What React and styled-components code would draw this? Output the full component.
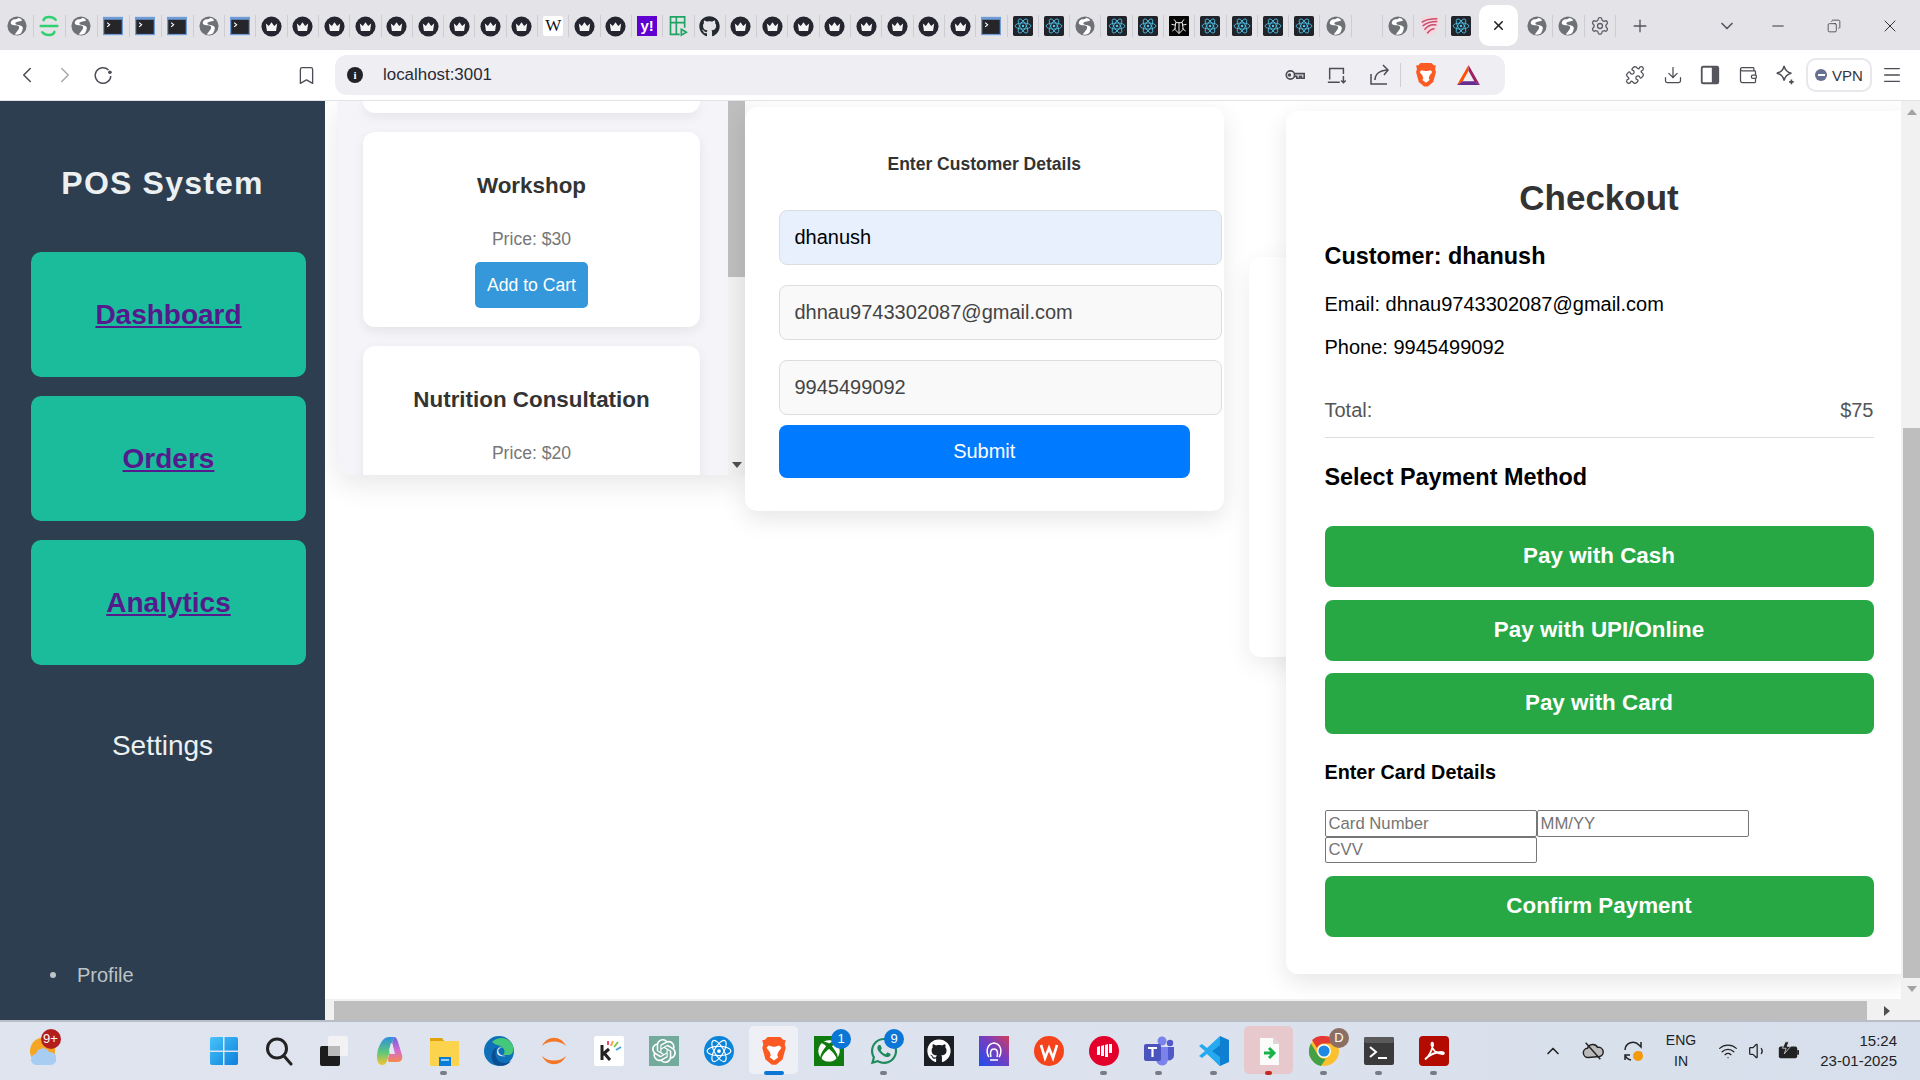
import styled, { createGlobalStyle } from "styled-components";
import {
  Bookmark,
  ChevronDown,
  ChevronLeft,
  ChevronRight,
  ChevronUp,
  Copy,
  Download,
  Menu,
  Minus,
  Plus,
  Puzzle,
  Settings,
  Wallet,
  Wifi,
  Volume1,
  X,
} from "lucide-react";
import { FaGithub, FaWhatsapp, FaXbox } from "react-icons/fa";
import { SiOpenai } from "react-icons/si";

const GlobalStyle = createGlobalStyle`
  html, body { margin: 0; padding: 0; height: 100%; overflow: hidden; }
  body { font-family: "Liberation Sans", Arial, sans-serif; background: #fff; }
  * { box-sizing: content-box; }
`;

/* ---------- small drawings ---------- */

const Globe = ({ size = 20 }) => (
  <svg width={size} height={size} viewBox="0 0 24 24">
    <circle cx="12" cy="12" r="11.5" fill="#6e7175" />
    <path fill="#fff" d="M14 1.5c-1 2-3 2.5-5 2.5S5 6 4.500 8s2 2.500 4.500 3 5 0 5.500 2-1 4-2.500 5.500-2 3-3 3.500c3 1 6 0 8-1.500 1-2 2-4 2-6s-2-3-4-3.500-4.500-.5-5-2 2-2 4-2.500 4-.5 4-1.500c-1-1.500-2.500-2.500-4.500-2.500z" />
  </svg>
);

const Crown = () => (
  <svg width="21" height="21" viewBox="0 0 24 24">
    <circle cx="12" cy="12" r="11.500" fill="#25252f" />
    <path fill="#f4f4f4" d="M5.500 8.500l3.500 3 3-4.500 3 4.500 3.500-3-1.300 8.500H6.800z" />
  </svg>
);

const Terminal = () => (
  <svg width="20" height="20" viewBox="0 0 24 24">
    <rect x="0" y="1" width="24" height="22" fill="#6f9bd8" />
    <rect x="1.500" y="4.500" width="21" height="17" fill="#26262a" />
    <path d="M5 8l3 2.500L5 13" stroke="#fff" strokeWidth="1.300" fill="none" />
  </svg>
);

const Atom = ({ color = "#4fc3e8", width = 1 }) => (
  <g fill="none" stroke={color} strokeWidth={width}>
    <ellipse cx="12" cy="12" rx="9.500" ry="3.700" />
    <ellipse cx="12" cy="12" rx="9.500" ry="3.700" transform="rotate(60 12 12)" />
    <ellipse cx="12" cy="12" rx="9.500" ry="3.700" transform="rotate(120 12 12)" />
    <circle cx="12" cy="12" r="1.500" fill={color} stroke="none" />
  </g>
);

const ReactTab = () => (
  <svg width="20" height="20" viewBox="0 0 24 24">
    <rect width="24" height="24" rx="2" fill="#20232a" />
    <Atom />
  </svg>
);

const BugTab = () => (
  <svg width="20" height="20" viewBox="0 0 24 24">
    <rect width="24" height="24" rx="1" fill="#050505" />
    <path d="M8 8h8l1 8-5 5-5-5zM6 4l3 4M18 4l-3 4M3 10l5 1M21 10l-5 1M4 18l4-3M20 18l-4-3M12 8v13" stroke="#eee" strokeWidth="1.200" fill="none" />
  </svg>
);

const SentryTab = () => (
  <svg width="20" height="22" viewBox="0 0 24 26" fill="none" stroke="#2fd16f" strokeWidth="3" strokeLinecap="round">
    <path d="M20 5.500C16 1 7 1 5.500 6" />
    <path d="M2 13h20" />
    <path d="M4 20.500C8 25 17 25 18.500 20" />
  </svg>
);

const SheetTab = () => (
  <svg width="20" height="22" viewBox="0 0 24 26" fill="none" stroke="#1fa463" strokeWidth="2">
    <path d="M14 23H3V2h17v13M3 9h17M10 2v21" />
    <path d="M16 17l6 3.500-6 3.500z" />
  </svg>
);

const ShieldTab = () => (
  <svg width="22" height="24" viewBox="0 0 24 26">
    <path fill="#f3d9dd" d="M2 4c7-3 13-3 20 0 0 9-2 16-10 20C4 20 2 13 2 4z" />
    <path d="M3 9c5-4 11-4 17-4M4 13c5-5 11-5 16-5M6 17c4-5 9-6 13-5M9 21c3-4 6-5 8-5" stroke="#c94a6c" strokeWidth="1.700" fill="none" />
  </svg>
);

const WikiTab = styled.span`
  width: 20px;
  height: 20px;
  background: #fff;
  border-radius: 2px;
  color: #111;
  font: 17px/20px "Liberation Serif", serif;
  text-align: center;
`;

const YahooTab = styled.span`
  width: 20px;
  height: 20px;
  background: #6001d2;
  color: #fff;
  font: bold 15px/20px "Liberation Sans", sans-serif;
  text-align: center;
`;

const BraveLogo = ({ size = 22 }) => (
  <svg width={size} height={size * 1.15} viewBox="0 0 24 28">
    <path fill="#fb5b22" d="M6 1h12l2.500 2.500L23 4l-1 4 1 3-3 11-6 5h-4l-6-5L1 11l1-3-1-4 2.500-.5z" />
    <path fill="#fff" d="M7 9l4 1h2l4-1 2 2-3 4-1 3 1 2-4 3-4-3 1-2-1-3-3-4z" />
  </svg>
);

const BatLogo = () => (
  <svg width="23" height="22" viewBox="0 0 24 23">
    <polygon points="12,1 0,22 6,18 12,7" fill="#ff5000" />
    <polygon points="12,1 24,22 18,18 12,7" fill="#9e1f63" />
    <polygon points="0,22 24,22 18,18 6,18" fill="#662d91" />
  </svg>
);

const KeyIcon = () => (
  <svg width="22" height="22" viewBox="0 0 24 24" fill="none" stroke="#4c4c55" strokeWidth="1.800">
    <circle cx="7" cy="12" r="4.500" />
    <path d="M11.500 10.500H22v5h-3v-2h-2v2h-3v-2h-2.500" />
    <circle cx="6" cy="12" r="1" fill="#4c4c55" />
  </svg>
);

const InstallIcon = () => (
  <svg width="22" height="22" viewBox="0 0 24 24" fill="none" stroke="#4c4c55" strokeWidth="1.600">
    <path d="M4 17V5h15v6M2 20h13M19 13v7M16.500 18l2.500 2.500 2.500-2.500" />
  </svg>
);

const ShareIcon = () => (
  <svg width="24" height="24" viewBox="0 0 24 24" fill="none" stroke="#4c4c55" strokeWidth="1.500">
    <path d="M4 11v10h16" />
    <path d="M8 17c0-6 5-10 13-10M16 2l5 5-4 5" />
  </svg>
);

const ReloadIcon = () => (
  <svg width="22" height="22" viewBox="0 0 24 24" fill="none" stroke="#4c4c55" strokeWidth="1.600">
    <path d="M18 6.500A8.500 8.500 0 1020.500 13" />
    <circle cx="19.500" cy="9" r="2" fill="#4c4c55" stroke="none" />
  </svg>
);

const SidePanelIcon = () => (
  <svg width="22" height="22" viewBox="0 0 24 24">
    <rect x="3" y="3" width="18" height="18" rx="1.500" fill="none" stroke="#55555e" strokeWidth="2" />
    <rect x="14" y="3" width="7" height="18" fill="#55555e" />
  </svg>
);

const StarIcon = () => (
  <svg width="22" height="22" viewBox="0 0 24 24" fill="none" stroke="#4c4c55" strokeWidth="1.600">
    <path d="M11 2c1 5 3 7 8 8-5 1-7 3-8 8-1-5-3-7-8-8 5-1 7-3 8-8z" />
    <path d="M19 17v5M16.500 19.500h5" strokeWidth="1.800" />
  </svg>
);

const InfoDot = styled.span`
  width: 16px;
  height: 16px;
  border-radius: 50%;
  background: #222228;
  color: #fff;
  font: bold 11px/16px "Liberation Serif", serif;
  text-align: center;
`;

const WindowsIcon = () => (
  <svg width="30" height="30" viewBox="0 0 30 30">
    <defs>
      <linearGradient id="win" x1="0" y1="0" x2="1" y2="1">
        <stop offset="0" stopColor="#47c4f8" />
        <stop offset="1" stopColor="#0d7fdc" />
      </linearGradient>
    </defs>
    <path fill="url(#win)" d="M1 3a2 2 0 012-2h11v13.500H1zM15.500 1H27a2 2 0 012 2v11.500H15.500zM1 16h13v13H3a2 2 0 01-2-2zM15.500 16H29v11a2 2 0 01-2 2H15.500z" />
  </svg>
);

const SearchIcon = () => (
  <svg width="30" height="30" viewBox="0 0 30 30" fill="none" stroke="#222" strokeWidth="3">
    <circle cx="13" cy="12.500" r="9.500" />
    <path d="M20 20l7 8" strokeLinecap="round" />
  </svg>
);

const TaskViewIcon = () => (
  <svg width="30" height="30" viewBox="0 0 30 30">
    <rect x="1" y="10" width="20" height="20" rx="2" fill="#1c1c1c" />
    <rect x="9" y="0" width="20" height="20" rx="2" fill="#f2f2f2" />
    <rect x="9" y="10" width="12" height="10" fill="#b9b9b9" />
  </svg>
);

const CopilotIcon = () => (
  <svg width="30" height="30" viewBox="0 0 30 30">
    <defs>
      <linearGradient id="cpa" x1="0" y1="0" x2="0" y2="1">
        <stop offset="0" stopColor="#2d8fe0" />
        <stop offset=".55" stopColor="#5fc77a" />
        <stop offset="1" stopColor="#f4c430" />
      </linearGradient>
      <linearGradient id="cpb" x1="0" y1="0" x2="0" y2="1">
        <stop offset="0" stopColor="#6a5fe0" />
        <stop offset=".55" stopColor="#d66bd0" />
        <stop offset="1" stopColor="#f58a4b" />
      </linearGradient>
    </defs>
    <path fill="url(#cpa)" d="M15 1h5l-7 24c-1 3-3 4-5 4-3 0-5-3-5-8C3 12 8 1 15 1z" />
    <path fill="url(#cpb)" d="M20 1c2 0 3 2 4 5l4 13c1 4-1 7-4 7h-8c-2 0-2-1-2-3l6-22z" />
    <path fill="#e3e7f0" d="M15 14l2-7c1 0 2 1 2 3l2 8h-5z" />
  </svg>
);

const FolderIcon = () => (
  <svg width="30" height="30" viewBox="0 0 30 30">
    <path fill="#e0a30b" d="M1 2h12l3 4H1z" />
    <rect x="1" y="5" width="29" height="25" rx="1" fill="#fbd34d" />
    <rect x="10" y="21" width="12" height="9" fill="#0c7dd6" />
    <rect x="12" y="23" width="8" height="2" fill="#8ed0f8" />
  </svg>
);

const EdgeIcon = () => (
  <svg width="30" height="30" viewBox="0 0 30 30">
    <circle cx="15" cy="15" r="15" fill="#0f6fb8" />
    <path fill="#45c87a" d="M8 6c6-6 16-5 20 2 3 5 1 11-3 11h-6c2-2 2-5 0-7-3-3-8-3-11-6z" />
    <path fill="#e3e7f0" d="M22 20c-4 1-9 0-9-4s3-6 6-4c-3-1-6 2-4 5 1 2 4 3 7 3z" />
    <path fill="#0b4d91" d="M12 29C6 25 6 15 13 11c-3 5-2 12 3 15 4 2 8 1 11-1-3 4-9 6-15 4z" />
  </svg>
);

const ArcIcon = () => (
  <svg width="30" height="30" viewBox="0 0 30 30" fill="#f37726">
    <path d="M3 10C8 -1 22 -1 27 10 21 4 9 4 3 10z" />
    <path d="M3 20c5 11 19 11 24 0-6 6-18 6-24 0z" />
  </svg>
);

const KiteIcon = () => (
  <svg width="30" height="30" viewBox="0 0 30 30">
    <rect width="30" height="30" rx="2" fill="#fff" />
    <path d="M8 9v15M8 19l7-6M10 17l6 7" stroke="#222" strokeWidth="3" fill="none" />
    <path d="M17 10l2-5" stroke="#f4a742" strokeWidth="2" />
    <path d="M20 11l4-5" stroke="#7ac943" strokeWidth="2" />
    <path d="M22 14l5-3" stroke="#45a3e5" strokeWidth="2" />
    <path d="M14 9l0-4" stroke="#e94e77" strokeWidth="2" />
  </svg>
);

const IconTile = styled.span`
  width: 30px;
  height: 30px;
  display: flex;
  align-items: center;
  justify-content: center;
  background: ${(p) => p.$bg};
  color: #fff;
`;

const ReactCircle = () => (
  <svg width="30" height="30" viewBox="0 0 24 24">
    <circle cx="12" cy="12" r="12" fill="#0b84d9" />
    <Atom color="#fff" width="0.900" />
  </svg>
);

const ProtonIcon = () => (
  <svg width="30" height="30" viewBox="0 0 30 30">
    <defs>
      <linearGradient id="pr" x1="0" y1="1" x2="1" y2="0">
        <stop offset="0" stopColor="#1d4ff0" />
        <stop offset=".6" stopColor="#7d3dbb" />
        <stop offset="1" stopColor="#cf3f5a" />
      </linearGradient>
    </defs>
    <rect width="30" height="30" fill="url(#pr)" />
    <path d="M10 21c-3-4-3-13 5-14 8 1 8 10 5 14M11 24h8M12 21c-1-3-1-8 3-8s4 5 3 8" stroke="#fff" strokeWidth="1.500" fill="none" />
  </svg>
);

const WpsIcon = () => (
  <svg width="30" height="30" viewBox="0 0 30 30">
    <circle cx="15" cy="15" r="15" fill="#f5441b" />
    <path d="M7 9l4 13 4-10 4 10 4-13" stroke="#fff" strokeWidth="2.600" fill="none" />
  </svg>
);

const MiIcon = () => (
  <svg width="30" height="30" viewBox="0 0 30 30">
    <circle cx="15" cy="15" r="15" fill="#e3002b" />
    <path fill="#fff" d="M8 11l3-1v9H8zM12 10l3-1v11h-3zM16 9l3-1v13h-3zM20 8h3v9h-3z" />
  </svg>
);

const TeamsIcon = () => (
  <svg width="32" height="30" viewBox="0 0 32 30">
    <circle cx="19" cy="5" r="4.500" fill="#7b83eb" />
    <circle cx="27" cy="7" r="3.200" fill="#5059c9" />
    <path fill="#5059c9" d="M22 11h9v9a5 5 0 01-7 4z" />
    <path fill="#7b83eb" d="M10 11h15v12a6 6 0 01-12 1z" />
    <rect x="1" y="8" width="17" height="17" rx="2" fill="#4b53bc" />
    <path d="M5 12h9M9.500 12v9" stroke="#fff" strokeWidth="2.200" />
  </svg>
);

const VscodeIcon = () => (
  <svg width="30" height="30" viewBox="0 0 30 30">
    <path fill="#0e7fd1" d="M21 0l9 4v22l-9 4-12-12 12-9.500z" />
    <path fill="#25a9ef" d="M21 0l-13 12-5-4-3 2 6 5-6 5 3 2 5-4 13 12V21l-8-6 8-6z" />
  </svg>
);

const NoteIcon = () => (
  <svg width="24" height="30" viewBox="0 0 24 30">
    <path fill="#fbfbfb" d="M3 2h13l6 6v21H3z" />
    <path fill="#d8d8d8" d="M16 2l6 6h-6z" />
    <path d="M7 17h8M12 12l5 5-5 5" stroke="#18b24b" strokeWidth="3" fill="none" />
  </svg>
);

const ChromeIcon = () => (
  <svg width="30" height="30" viewBox="0 0 30 30">
    <circle cx="15" cy="15" r="15" fill="#fbc02d" />
    <path fill="#e53935" d="M15 0a15 15 0 0113 7.500H15A7.500 7.500 0 008 12L3 4A15 15 0 0115 0z" />
    <path fill="#43a047" d="M2 7.500L9 19a7.500 7.500 0 008 3.500L12 30A15 15 0 012 7.500z" />
    <circle cx="15" cy="15" r="7" fill="#fff" />
    <circle cx="15" cy="15" r="5.600" fill="#1e88e5" />
  </svg>
);

const ConsoleIcon = () => (
  <svg width="30" height="30" viewBox="0 0 30 30">
    <rect y="1" width="30" height="28" rx="2" fill="#3a3a3a" />
    <rect y="1" width="30" height="6" rx="2" fill="#5a5a5a" />
    <path d="M6 11l6 5-6 5" stroke="#fff" strokeWidth="2" fill="none" />
    <path d="M14 22h9" stroke="#fff" strokeWidth="2" />
  </svg>
);

const PdfIcon = () => (
  <svg width="30" height="30" viewBox="0 0 30 30">
    <rect width="30" height="30" rx="4" fill="#b30b00" />
    <path d="M6 23c4-2 7-9 8-14 .5-3-2-3-1.500 0 1 5 5 9 11 9 2 0 2-2-1-2-5 0-11 2-16 7z" stroke="#fff" strokeWidth="1.800" fill="none" />
  </svg>
);

const WeatherIcon = () => (
  <svg width="27" height="30" viewBox="0 0 27 30">
    <path fill="#f6a623" d="M17 1C8 1 2 6 1 14c-.5 5 2 9 5 10h20V6c-2-3-5-5-9-5z" />
    <path fill="#a8cdf3" d="M8 29a5.500 5.500 0 01-1-11 7 7 0 0113-2 6.500 6.500 0 012 13z" />
  </svg>
);

const CloudOffIcon = () => (
  <svg width="22" height="22" viewBox="0 0 24 24" fill="none" stroke="#222" strokeWidth="1.600">
    <path d="M7 19a5 5 0 01-1-10 6 6 0 0111-1 5 5 0 012 10z" fill="#bbb" />
    <path d="M4 3l16 18" />
  </svg>
);

const SyncIcon = () => (
  <svg width="24" height="24" viewBox="0 0 24 24" fill="none" stroke="#222" strokeWidth="1.500">
    <path d="M4 11a8 8 0 0114-5l2 2V3M20 13a8 8 0 01-2 4M4 21v-5h5M4 16a8 8 0 006 5" />
    <circle cx="17" cy="17" r="5" fill="#f59a0c" stroke="none" />
  </svg>
);

const BatteryIcon = () => (
  <svg width="22" height="22" viewBox="0 0 24 24">
    <rect x="2" y="7" width="20" height="13" rx="2" fill="#222" />
    <rect x="22" y="11" width="2" height="5" fill="#222" />
    <path d="M9 2l-3 7h4l-2 6 7-8h-4l2-5z" fill="#222" stroke="#e5e9f1" strokeWidth="0.800" />
  </svg>
);

/* ---------- browser chrome ---------- */

const Page = styled.div`
  width: 1920px;
  height: 1080px;
  display: flex;
  flex-direction: column;
  overflow: hidden;
`;

const TabStrip = styled.div`
  height: 50px;
  background: #e3e3e8;
  display: flex;
  align-items: center;
  padding-left: 1.500px;
`;

const Tab = styled.div`
  flex: none;
  width: ${(p) => (p.$loose ? 32.05 : 31.3)}px;
  height: 22px;
  margin-top: 2px;
  display: flex;
  align-items: center;
  justify-content: center;
  box-sizing: border-box;
  border-right: 1px solid ${(p) => (p.$plain ? "transparent" : "#cdcdd3")};
`;

const ActiveTab = styled.div`
  flex: none;
  width: 39px;
  height: 41px;
  margin: 1px 4px 0 2px;
  background: #fff;
  border-radius: 10px;
  display: flex;
  align-items: center;
  justify-content: center;
  color: #222;
`;

const NewTab = styled.div`
  flex: none;
  width: 40px;
  height: 30px;
  margin-top: 2px;
  margin-left: 4px;
  display: flex;
  align-items: center;
  justify-content: center;
  color: #55555e;
`;

const WindowControls = styled.div`
  margin-left: auto;
  margin-right: 2px;
  display: flex;
  align-items: center;
  color: #333;
`;

const TabsMenu = styled.div`
  margin: 2px 13px 0 0;
  display: flex;
  color: #55555e;
`;

const WindowButton = styled.div`
  width: 56px;
  height: 32px;
  margin-top: 2px;
  display: flex;
  align-items: center;
  justify-content: center;
`;

const Toolbar = styled.div`
  height: 50px;
  background: #fff;
  border-bottom: 1px solid #e1e1e7;
  display: flex;
  align-items: center;
`;

const NavGroup = styled.div`
  width: 317px;
  padding: 0 10px 0 8px;
  display: flex;
  align-items: center;
`;

const ToolButton = styled.div`
  flex: none;
  width: ${(p) => p.$w || 38}px;
  height: 34px;
  margin-left: ${(p) => (p.$push ? "auto" : "0")};
  display: flex;
  align-items: center;
  justify-content: center;
  color: ${(p) => p.$color || "#4c4c55"};
`;

const Address = styled.div`
  width: 1170px;
  height: 40px;
  box-sizing: border-box;
  padding: 0 16px 0 12px;
  background: #eeeef3;
  border-radius: 12px;
  display: flex;
  align-items: center;
`;

const Url = styled.span`
  margin-left: 20px;
  font-size: 16.900px;
  color: #2a2a33;
`;

const AddressActions = styled.div`
  margin-left: auto;
  display: flex;
  align-items: center;
`;

const ActionDivider = styled.span`
  width: 1px;
  height: 24px;
  background: #cfcfd6;
  margin-right: 4px;
`;

const ToolbarRight = styled.div`
  margin-left: auto;
  padding-right: 8px;
  display: flex;
  align-items: center;
`;

const VpnPill = styled.div`
  width: 62px;
  height: 30px;
  margin-left: 2px;
  border: 2px solid #e7e7ec;
  border-radius: 10px;
  display: flex;
  align-items: center;
  justify-content: center;
  gap: 5px;
  font-size: 15px;
  color: #33333b;
`;

const VpnDot = styled.span`
  width: 12px;
  height: 12px;
  border-radius: 50%;
  background: #66708f;
  display: flex;
  align-items: center;
  justify-content: center;
  &::after {
    content: "";
    width: 7px;
    height: 2px;
    background: #fff;
  }
`;

/* ---------- app ---------- */

const Body = styled.div`
  height: 919px;
  display: flex;
`;

const Sidebar = styled.aside`
  flex: none;
  width: 325px;
  background: #2c3e50;
  display: flex;
  flex-direction: column;
  position: relative;
  z-index: 2;
`;

const Brand = styled.h2`
  margin: 64px 0 51px;
  font-size: 32px;
  line-height: 36px;
  font-weight: 700;
  letter-spacing: 1.200px;
  color: #ecf0f1;
  text-align: center;
`;

const NavLink = styled.a`
  width: 275px;
  height: 125px;
  margin: 0 0 19px 31px;
  background: #1abc9c;
  border-radius: 10px;
  display: flex;
  align-items: center;
  justify-content: center;
  color: #551a8b;
  font-size: 28px;
  font-weight: 700;
  text-decoration: underline;
`;

const SettingsLabel = styled.div`
  margin-top: 46px;
  font-size: 28px;
  line-height: 32px;
  color: #ecf0f1;
  text-align: center;
`;

const ProfileList = styled.ul`
  margin: auto 0 0;
  padding: 0 0 33px 50px;
  list-style: none;
  color: #bdc3c7;
  font-size: 20px;
  line-height: 24px;
`;

const ProfileItem = styled.li`
  display: flex;
  align-items: center;
  &::before {
    content: "";
    width: 6px;
    height: 6px;
    margin-right: 21px;
    border-radius: 50%;
    background: #bdc3c7;
  }
`;

const Viewport = styled.div`
  flex: 1;
  min-width: 0;
  display: grid;
  grid-template-columns: minmax(0, 1fr) 19px;
  grid-template-rows: minmax(0, 1fr) 21px;
`;

const Stage = styled.main`
  overflow: hidden;
  display: flex;
  align-items: flex-start;
  padding-left: 13px;
  background: #fff;
`;

const ScrollRail = styled.div`
  background: #f1f1f1;
  display: flex;
  flex-direction: ${(p) => (p.$horizontal ? "row" : "column")};
  align-items: flex-end;
`;

const RailArrow = styled.div`
  flex: none;
  width: ${(p) => p.$w || 17}px;
  height: ${(p) => p.$h || 21}px;
  display: flex;
  align-items: center;
  justify-content: center;
  &::after {
    content: "";
    border-style: solid;
    border-color: transparent;
    ${(p) => p.$dir === "up" && `border-width: 0 5px 6px; border-bottom-color: ${p.$color || "#a3a3a3"};`}
    ${(p) => p.$dir === "down" && `border-width: 6px 5px 0; border-top-color: ${p.$color || "#a3a3a3"};`}
    ${(p) => p.$dir === "right" && `border-width: 5px 0 5px 6px; border-left-color: ${p.$color || "#505050"};`}
  }
`;

const RailThumb = styled.div`
  flex: none;
  background: #bebebe;
  width: ${(p) => p.$w};
  height: ${(p) => p.$h};
  margin: ${(p) => p.$m || 0};
`;

const ListPanel = styled.section`
  flex: none;
  width: 407px;
  height: 374px;
  display: flex;
  background: #f4f4f9;
  box-shadow: 0 8px 30px rgba(0, 0, 0, 0.1);
  border-radius: 0 0 0 10px;
  overflow: hidden;
`;

const ProductList = styled.div`
  flex: 1;
  padding: 0 25px;
  overflow: hidden;
`;

const Card = styled.article`
  width: 337px;
  height: 195px;
  margin-bottom: 19px;
  box-sizing: border-box;
  padding-top: 41px;
  background: #fff;
  border-radius: 12px;
  box-shadow: 0 4px 12px rgba(0, 0, 0, 0.07);
  text-align: center;
`;

const CardEnd = styled(Card)`
  height: 12px;
  padding: 0;
  border-radius: 0 0 12px 12px;
`;

const ProductName = styled.h3`
  margin: 0;
  font-size: 22.400px;
  line-height: 26px;
  color: #333;
`;

const ProductPrice = styled.p`
  margin: 30px 0 13px;
  font-size: 17.600px;
  line-height: 20px;
  color: #777;
`;

const AddButton = styled.button`
  width: 113px;
  height: 46px;
  padding: 0;
  border: 0;
  border-radius: 5px;
  background: #3498db;
  color: #fff;
  font: 17.600px "Liberation Sans", Arial, sans-serif;
`;

const PanelBar = styled.div`
  flex: none;
  width: 17px;
  background: #f1f1f1;
  display: flex;
  flex-direction: column;
`;

const BarGap = styled.div`
  flex: 1;
`;

const CustomerPanel = styled.section`
  flex: none;
  width: 411.500px;
  margin-top: 6px;
  padding: 47px 33.500px 33px;
  background: #fff;
  border-radius: 12px;
  box-shadow: 0 8px 24px rgba(0, 0, 0, 0.1);
`;

const PanelTitle = styled.h3`
  margin: 0 0 36px;
  font-size: 17.500px;
  line-height: 20px;
  color: #333;
  text-align: center;
`;

const Field = styled.input`
  display: block;
  width: 100%;
  height: 53px;
  padding: 0 15px;
  margin-bottom: ${(p) => p.$mb || 20}px;
  border: 1px solid #ddd;
  border-radius: 8px;
  background: ${(p) => (p.$filled ? "#e8f0fe" : "#f9f9f9")};
  color: ${(p) => (p.$filled ? "#000" : "#444")};
  font: 20px "Liberation Sans", Arial, sans-serif;
  outline: none;
`;

const SubmitButton = styled.button`
  display: block;
  width: 100%;
  height: 53px;
  padding: 0;
  border: 0;
  border-radius: 8px;
  background: #007bff;
  color: #fff;
  font: 20px "Liberation Sans", Arial, sans-serif;
`;

const HiddenPanel = styled.section`
  flex: none;
  width: 100px;
  height: 400px;
  margin: 156px -63px 0 25px;
  background: #fff;
  border-radius: 12px;
  box-shadow: 0 8px 24px rgba(0, 0, 0, 0.08);
`;

const CheckoutPanel = styled.section`
  flex: none;
  width: 549px;
  margin-top: 10px;
  padding: 67px 39px 37px;
  background: #fff;
  border-radius: 12px;
  box-shadow: 0 8px 24px rgba(0, 0, 0, 0.1);
`;

const CheckoutTitle = styled.h1`
  margin: 0 0 24px;
  font-size: 35px;
  line-height: 40px;
  color: #333;
  text-align: center;
`;

const SectionHeading = styled.h2`
  margin: ${(p) => p.$m || 0};
  font-size: ${(p) => p.$size || 23.4}px;
  line-height: ${(p) => p.$lh || 28}px;
  color: #000;
`;

const ContactLine = styled.p`
  margin: ${(p) => p.$m};
  font-size: 20px;
  line-height: 24px;
  color: #000;
`;

const TotalRow = styled.div`
  margin-top: 39px;
  padding-bottom: 15px;
  border-bottom: 1px solid #ddd;
  display: flex;
  justify-content: space-between;
  font-size: 20px;
  line-height: 24px;
  color: #555;
`;

const PayButton = styled.button`
  display: block;
  width: 100%;
  height: 61px;
  margin-bottom: ${(p) => p.$mb || 0}px;
  padding: 0 0 1px;
  box-sizing: border-box;
  border: 0;
  border-radius: 8px;
  background: #28a745;
  color: #fff;
  font: bold 22.400px "Liberation Sans", Arial, sans-serif;
`;

const CardFields = styled.div`
  width: 430px;
  margin-bottom: 13px;
  display: flex;
  flex-wrap: wrap;
`;

const CardInput = styled.input`
  box-sizing: border-box;
  width: 212px;
  height: ${(p) => p.$h || 27}px;
  padding: 1px 3px;
  border: 1px solid #767676;
  border-radius: 2px;
  font: 16.700px "Liberation Sans", Arial, sans-serif;
  color: #000;
  background: #fff;
  outline: none;
  &::placeholder {
    color: #757575;
    opacity: 1;
  }
`;

/* ---------- taskbar ---------- */

const Taskbar = styled.footer`
  height: 60px;
  box-sizing: border-box;
  border-top: 2px solid #b9bdc6;
  background: linear-gradient(90deg, #dfe4ef, #dde3ee 50%, #d6dfeb);
  display: flex;
  align-items: flex-start;
`;

const WeatherSlot = styled.div`
  flex: none;
  width: 196px;
  height: 58px;
  padding-left: 14.500px;
  box-sizing: border-box;
  display: flex;
  align-items: flex-start;
`;

const AppSlot = styled.div`
  flex: none;
  position: relative;
  width: ${(p) => (p.$wide ? 49 : 55)}px;
  margin: ${(p) => (p.$wide ? "4px 3px 0" : "4px 0 0")};
  height: 48px;
  box-sizing: border-box;
  padding-top: 10px;
  border-radius: 5px;
  background: ${(p) => p.$bg || "transparent"};
  display: flex;
  flex-direction: column;
  align-items: center;
`;

const RunDot = styled.span`
  position: absolute;
  bottom: -1px;
  width: ${(p) => (p.$active ? 20 : 7)}px;
  height: 4px;
  border-radius: 2px;
  background: ${(p) => p.$color || "#787c84"};
`;

const Badge = styled.span`
  position: absolute;
  top: ${(p) => p.$top || 3}px;
  left: ${(p) => p.$left || 30}px;
  min-width: 20px;
  height: 20px;
  padding: 0 1px;
  box-sizing: border-box;
  border-radius: 10px;
  background: ${(p) => p.$bg || "#0b76d6"};
  color: #fff;
  font-size: 13px;
  line-height: 20px;
  text-align: center;
`;

const Tray = styled.div`
  margin-left: auto;
  height: 58px;
  display: flex;
  align-items: center;
  color: #222;
`;

const TraySlot = styled.div`
  flex: none;
  width: ${(p) => p.$w}px;
  display: flex;
  justify-content: center;
`;

const LangBox = styled.div`
  width: 44px;
  margin: 0 8px 0 6px;
  font-size: 14px;
  line-height: 21px;
  text-align: center;
`;

const ClockBox = styled.div`
  width: 84px;
  margin: 0 23px 0 9px;
  font-size: 15px;
  line-height: 20px;
  text-align: right;
`;

/* ---------- data ---------- */

const crowns = (n) => Array(n).fill("crown");

const TAB_ICONS = [
  "globe", "sentry", "globe", "term", "term", "term", "globe", "term",
  ...crowns(9), "wiki", "crown", "crown", "yahoo", "sheet", "github",
  ...crowns(8), "term", "react", "react", "globe", "react", "react", "bug",
  "react", "react", "react", "react", "globe", "blank", "globe", "shield", "react",
];

const renderTabIcon = (kind) => {
  switch (kind) {
    case "globe": return <Globe />;
    case "crown": return <Crown />;
    case "term": return <Terminal />;
    case "react": return <ReactTab />;
    case "bug": return <BugTab />;
    case "sentry": return <SentryTab />;
    case "sheet": return <SheetTab />;
    case "shield": return <ShieldTab />;
    case "wiki": return <WikiTab>W</WikiTab>;
    case "yahoo": return <YahooTab>y!</YahooTab>;
    case "github": return <FaGithub size={21} color="#24292f" />;
    default: return null;
  }
};

const PRODUCTS = [
  { name: "Workshop", price: "$30", action: true },
  { name: "Nutrition Consultation", price: "$20" },
];

const PAY_OPTIONS = ["Pay with Cash", "Pay with UPI/Online", "Pay with Card"];

export default function App() {
  return (
    <Page>
      <GlobalStyle />

      <TabStrip>
        {TAB_ICONS.map((kind, i) => (
          <Tab key={i} $loose={i < 6} $plain={i === TAB_ICONS.length - 1}>{renderTabIcon(kind)}</Tab>
        ))}
        <ActiveTab><X size={15} strokeWidth={2.5} /></ActiveTab>
        <Tab><Globe /></Tab>
        <Tab><Globe /></Tab>
        <Tab><Settings size={20} color="#60606a" strokeWidth={1.6} /></Tab>
        <NewTab><Plus size={20} strokeWidth={1.6} /></NewTab>
        <WindowControls>
          <TabsMenu><ChevronDown size={20} /></TabsMenu>
          <WindowButton><Minus size={18} strokeWidth={1.3} /></WindowButton>
          <WindowButton><Copy size={14} strokeWidth={1.3} style={{ transform: "scaleX(-1)" }} /></WindowButton>
          <WindowButton><X size={20} strokeWidth={1.2} /></WindowButton>
        </WindowControls>
      </TabStrip>

      <Toolbar>
        <NavGroup>
          <ToolButton><ChevronLeft size={26} strokeWidth={1.4} /></ToolButton>
          <ToolButton $color="#a9a9b0"><ChevronRight size={26} strokeWidth={1.4} /></ToolButton>
          <ToolButton><ReloadIcon /></ToolButton>
          <ToolButton $push><Bookmark size={21} strokeWidth={1.5} /></ToolButton>
        </NavGroup>
        <Address>
          <InfoDot>i</InfoDot>
          <Url>localhost:3001</Url>
          <AddressActions>
            <ToolButton $w={42}><KeyIcon /></ToolButton>
            <ToolButton $w={42}><InstallIcon /></ToolButton>
            <ToolButton $w={42}><ShareIcon /></ToolButton>
            <ActionDivider />
            <ToolButton $w={42}><BraveLogo /></ToolButton>
            <ToolButton $w={42}><BatLogo /></ToolButton>
          </AddressActions>
        </Address>
        <ToolbarRight>
          <ToolButton $w={37.5}><Puzzle size={20} strokeWidth={1.5} /></ToolButton>
          <ToolButton $w={37.5}><Download size={20} strokeWidth={1.5} /></ToolButton>
          <ToolButton $w={37.5}><SidePanelIcon /></ToolButton>
          <ToolButton $w={37.5}><Wallet size={20} strokeWidth={1.5} /></ToolButton>
          <ToolButton $w={37.5}><StarIcon /></ToolButton>
          <VpnPill><VpnDot />VPN</VpnPill>
          <ToolButton $w={40}><Menu size={22} strokeWidth={1.4} /></ToolButton>
        </ToolbarRight>
      </Toolbar>

      <Body>
        <Sidebar>
          <Brand>POS System</Brand>
          <NavLink href="#dashboard">Dashboard</NavLink>
          <NavLink href="#orders">Orders</NavLink>
          <NavLink href="#analytics">Analytics</NavLink>
          <SettingsLabel>Settings</SettingsLabel>
          <ProfileList><ProfileItem>Profile</ProfileItem></ProfileList>
        </Sidebar>

        <Viewport>
          <Stage>
            <ListPanel>
              <ProductList>
                <CardEnd />
                {PRODUCTS.map((p) => (
                  <Card key={p.name}>
                    <ProductName>{p.name}</ProductName>
                    <ProductPrice>Price: {p.price}</ProductPrice>
                    {p.action && <AddButton>Add to Cart</AddButton>}
                  </Card>
                ))}
              </ProductList>
              <PanelBar>
                <RailThumb $w="17px" $h="176px" />
                <BarGap />
                <RailArrow $dir="down" $color="#505050" />
              </PanelBar>
            </ListPanel>

            <CustomerPanel>
              <PanelTitle>Enter Customer Details</PanelTitle>
              <Field $filled defaultValue="dhanush" />
              <Field defaultValue="dhnau9743302087@gmail.com" />
              <Field $mb={10} defaultValue="9945499092" />
              <SubmitButton>Submit</SubmitButton>
            </CustomerPanel>

            <HiddenPanel />

            <CheckoutPanel>
              <CheckoutTitle>Checkout</CheckoutTitle>
              <SectionHeading>Customer: dhanush</SectionHeading>
              <ContactLine $m="22px 0 0">Email: dhnau9743302087@gmail.com</ContactLine>
              <ContactLine $m="19px 0 0">Phone: 9945499092</ContactLine>
              <TotalRow><span>Total:</span><span>$75</span></TotalRow>
              <SectionHeading $m="25px 0 35px">Select Payment Method</SectionHeading>
              {PAY_OPTIONS.map((label, i) => (
                <PayButton key={label} $mb={i === 2 ? 0 : 12.5}>{label}</PayButton>
              ))}
              <SectionHeading $size={19.8} $lh={24} $m="26px 0">Enter Card Details</SectionHeading>
              <CardFields>
                <CardInput placeholder="Card Number" />
                <CardInput placeholder="MM/YY" />
                <CardInput $h={26} placeholder="CVV" />
              </CardFields>
              <PayButton>Confirm Payment</PayButton>
            </CheckoutPanel>
          </Stage>

          <ScrollRail>
            <RailArrow $dir="up" />
            <RailThumb $w="17px" $h="550px" $m="306px 0 0" />
            <RailArrow $dir="down" />
          </ScrollRail>

          <ScrollRail $horizontal>
            <RailThumb $w="1533px" $h="19px" $m="0 6px 0 9px" />
            <RailArrow $dir="right" $w={28} $h={19} />
          </ScrollRail>
          <ScrollRail />
        </Viewport>
      </Body>

      <Taskbar>
        <WeatherSlot>
          <AppSlot>
            <WeatherIcon />
            <Badge $bg="#b31d1d" $top={3} $left={26}>9+</Badge>
          </AppSlot>
        </WeatherSlot>
        <AppSlot><WindowsIcon /></AppSlot>
        <AppSlot><SearchIcon /></AppSlot>
        <AppSlot><TaskViewIcon /></AppSlot>
        <AppSlot><CopilotIcon /></AppSlot>
        <AppSlot><FolderIcon /><RunDot /></AppSlot>
        <AppSlot><EdgeIcon /></AppSlot>
        <AppSlot><ArcIcon /></AppSlot>
        <AppSlot><KiteIcon /></AppSlot>
        <AppSlot><IconTile $bg="#74aa9c"><SiOpenai size={24} /></IconTile></AppSlot>
        <AppSlot><ReactCircle /></AppSlot>
        <AppSlot $wide $bg="#eef0f6"><BraveLogo size={26} /><RunDot $active $color="#0b76d6" /></AppSlot>
        <AppSlot><IconTile $bg="#107c10"><FaXbox size={22} /></IconTile><Badge>1</Badge></AppSlot>
        <AppSlot><FaWhatsapp size={30} color="#1f8a5c" /><Badge $left={28}>9</Badge><RunDot /></AppSlot>
        <AppSlot><IconTile $bg="#1b1f23"><FaGithub size={24} /></IconTile></AppSlot>
        <AppSlot><ProtonIcon /></AppSlot>
        <AppSlot><WpsIcon /></AppSlot>
        <AppSlot><MiIcon /><RunDot /></AppSlot>
        <AppSlot><TeamsIcon /><RunDot /></AppSlot>
        <AppSlot><VscodeIcon /><RunDot /></AppSlot>
        <AppSlot $wide $bg="#e7c9cd"><NoteIcon /><RunDot $color="#c42b1c" /></AppSlot>
        <AppSlot><ChromeIcon /><Badge $bg="#8d6e63" $left={33} $top={2}>D</Badge><RunDot /></AppSlot>
        <AppSlot><ConsoleIcon /><RunDot /></AppSlot>
        <AppSlot><PdfIcon /><RunDot /></AppSlot>
        <Tray>
          <TraySlot $w={40}><ChevronUp size={20} /></TraySlot>
          <TraySlot $w={40}><CloudOffIcon /></TraySlot>
          <TraySlot $w={40}><SyncIcon /></TraySlot>
          <LangBox>ENG<br />IN</LangBox>
          <TraySlot $w={33}><Wifi size={20} strokeWidth={1.5} /></TraySlot>
          <TraySlot $w={28}><Volume1 size={20} strokeWidth={1.5} /></TraySlot>
          <TraySlot $w={32}><BatteryIcon /></TraySlot>
          <ClockBox>15:24<br />23-01-2025</ClockBox>
        </Tray>
      </Taskbar>
    </Page>
  );
}
